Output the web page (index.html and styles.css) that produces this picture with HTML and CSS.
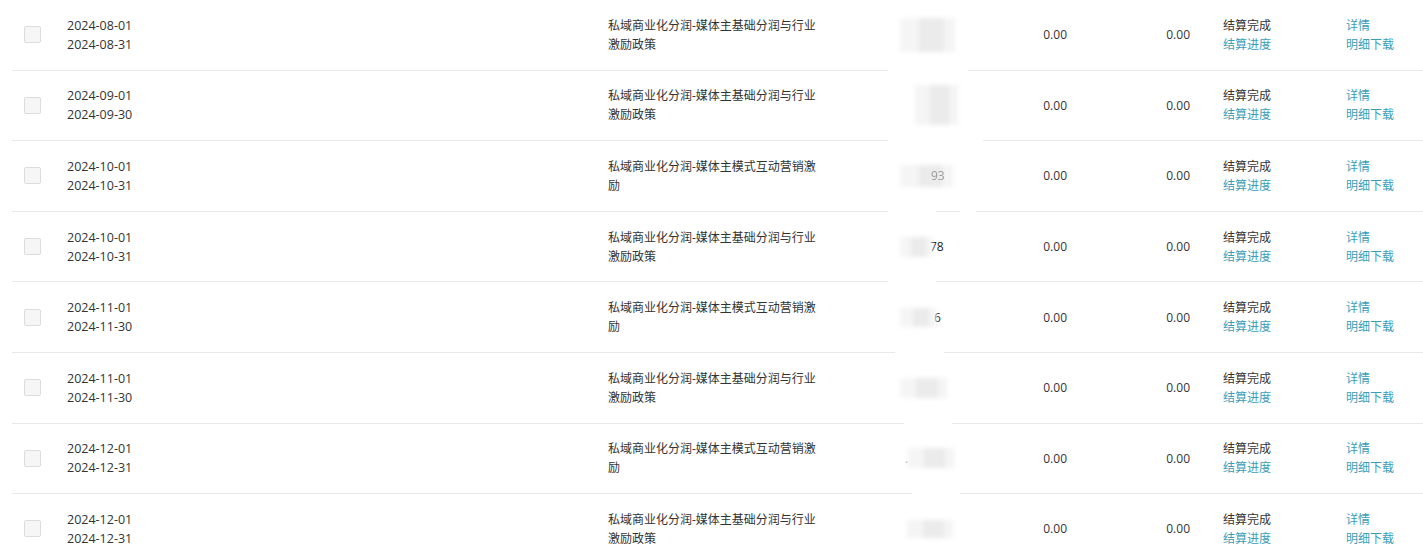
FILE: index.html
```html
<!DOCTYPE html>
<html lang="zh-CN">
<head>
    <meta charset="UTF-8">
    <title>结算记录</title>
    <link rel="stylesheet" href="styles.css">
</head>
<body>

    <div class="list">
        <!-- 2024-08 -->
        <div class="row">
            <div class="c-check"><span class="checkbox"></span></div>
            <div class="c-date"><div>2024-08-01</div><div>2024-08-31</div></div>
            <div class="c-desc">私域商业化分润-媒体主基础分润与行业激励政策</div>
            <div class="c-amount g1"><span class="smear s1"></span></div>
            <div class="c-num">0.00</div>
            <div class="c-num">0.00</div>
            <div class="c-status"><div>结算完成</div><a href="#">结算进度</a></div>
            <div class="c-ops"><a href="#">详情</a><a href="#">明细下载</a></div>
        </div>
        <div class="row">
            <div class="c-check"><span class="checkbox"></span></div>
            <div class="c-date"><div>2024-09-01</div><div>2024-09-30</div></div>
            <div class="c-desc">私域商业化分润-媒体主基础分润与行业激励政策</div>
            <div class="c-amount g2"><span class="smear s2"></span></div>
            <div class="c-num">0.00</div>
            <div class="c-num">0.00</div>
            <div class="c-status"><div>结算完成</div><a href="#">结算进度</a></div>
            <div class="c-ops"><a href="#">详情</a><a href="#">明细下载</a></div>
        </div>
        <div class="row">
            <div class="c-check"><span class="checkbox"></span></div>
            <div class="c-date"><div>2024-10-01</div><div>2024-10-31</div></div>
            <div class="c-desc">私域商业化分润-媒体主模式互动营销激励</div>
            <div class="c-amount g3"><span class="smear s3"></span><span class="peek p3">93</span></div>
            <div class="c-num">0.00</div>
            <div class="c-num">0.00</div>
            <div class="c-status"><div>结算完成</div><a href="#">结算进度</a></div>
            <div class="c-ops"><a href="#">详情</a><a href="#">明细下载</a></div>
        </div>
        <div class="row">
            <div class="c-check"><span class="checkbox"></span></div>
            <div class="c-date"><div>2024-10-01</div><div>2024-10-31</div></div>
            <div class="c-desc">私域商业化分润-媒体主基础分润与行业激励政策</div>
            <div class="c-amount g4"><span class="smear s4"></span><span class="peek">78</span></div>
            <div class="c-num">0.00</div>
            <div class="c-num">0.00</div>
            <div class="c-status"><div>结算完成</div><a href="#">结算进度</a></div>
            <div class="c-ops"><a href="#">详情</a><a href="#">明细下载</a></div>
        </div>
        <div class="row">
            <div class="c-check"><span class="checkbox"></span></div>
            <div class="c-date"><div>2024-11-01</div><div>2024-11-30</div></div>
            <div class="c-desc">私域商业化分润-媒体主模式互动营销激励</div>
            <div class="c-amount g5"><span class="smear s5"></span><span class="peek">6</span></div>
            <div class="c-num">0.00</div>
            <div class="c-num">0.00</div>
            <div class="c-status"><div>结算完成</div><a href="#">结算进度</a></div>
            <div class="c-ops"><a href="#">详情</a><a href="#">明细下载</a></div>
        </div>
        <div class="row">
            <div class="c-check"><span class="checkbox"></span></div>
            <div class="c-date"><div>2024-11-01</div><div>2024-11-30</div></div>
            <div class="c-desc">私域商业化分润-媒体主基础分润与行业激励政策</div>
            <div class="c-amount g6"><span class="smear s6"></span></div>
            <div class="c-num">0.00</div>
            <div class="c-num">0.00</div>
            <div class="c-status"><div>结算完成</div><a href="#">结算进度</a></div>
            <div class="c-ops"><a href="#">详情</a><a href="#">明细下载</a></div>
        </div>
        <div class="row">
            <div class="c-check"><span class="checkbox"></span></div>
            <div class="c-date"><div>2024-12-01</div><div>2024-12-31</div></div>
            <div class="c-desc">私域商业化分润-媒体主模式互动营销激励</div>
            <div class="c-amount g7"><span class="dot">.</span><span class="smear s7"></span></div>
            <div class="c-num">0.00</div>
            <div class="c-num">0.00</div>
            <div class="c-status"><div>结算完成</div><a href="#">结算进度</a></div>
            <div class="c-ops"><a href="#">详情</a><a href="#">明细下载</a></div>
        </div>
        <div class="row">
            <div class="c-check"><span class="checkbox"></span></div>
            <div class="c-date"><div>2024-12-01</div><div>2024-12-31</div></div>
            <div class="c-desc">私域商业化分润-媒体主基础分润与行业激励政策</div>
            <div class="c-amount"><span class="smear s8"></span></div>
            <div class="c-num">0.00</div>
            <div class="c-num">0.00</div>
            <div class="c-status"><div>结算完成</div><a href="#">结算进度</a></div>
            <div class="c-ops"><a href="#">详情</a><a href="#">明细下载</a></div>
        </div>
    </div>

</body>
</html>
```

FILE: styles.css
```css
/* Base */
body {
    margin: 0;
    background-color: #fff;
    color: #333;
    font-family: "Open Sans", "Noto Sans CJK SC", sans-serif;
    font-size: 12px;
    line-height: 19px;
    overflow: hidden;
}

a {
    color: #3b9db8;
    text-decoration: none;
    display: block;
}

/* List rows */
.list {
    margin-left: 12px;
}

.row {
    display: grid;
    grid-template-columns: 43px 541px 292px 102px 89px 123px 132px 1fr;
    align-items: center;
    height: 70.6px;
    box-sizing: border-box;
    border-bottom: 1px solid #e9e9e9;
}

.c-check {
    padding-left: 12px;
}

.checkbox {
    display: block;
    width: 15px;
    height: 15px;
    border: 1px solid #dcdcdc;
    border-radius: 2px;
    background-color: #f6f6f6;
}

.c-date {
    padding-left: 12px;
    font-size: 12.5px;
}

.c-desc {
    padding-left: 12px;
    width: 214px;
}

.c-num {
    text-align: right;
    padding-right: 12px;
}

.c-status {
    padding-left: 21px;
}

.c-ops {
    padding-left: 12px;
}

/* Blurred amount column */
.c-amount {
    position: relative;
    height: 100%;
    display: flex;
    align-items: center;
    padding-left: 12px;
}

.c-amount::after {
    content: "";
    position: absolute;
    left: 0;
    right: 0;
    bottom: -1px;
    height: 1px;
}

.g1::after { background: linear-gradient(90deg, #fff 80px, transparent 80px); }
.g2::after { background: linear-gradient(90deg, #fff 95px, transparent 95px); }
.g3::after { background: linear-gradient(90deg, #fff 48px, transparent 48px, transparent 72px, #fff 72px, #fff 88px, transparent 88px); }
.g4::after { background: linear-gradient(90deg, #fff 48px, transparent 48px); }
.g5::after { background: linear-gradient(90deg, transparent 7px, #fff 7px, #fff 56px, transparent 56px); }
.g6::after { background: linear-gradient(90deg, transparent 16px, #fff 16px, #fff 64px, transparent 64px); }
.g7::after { background: linear-gradient(90deg, transparent 24px, #fff 24px, #fff 72px, transparent 72px); }

.smear {
    display: block;
    height: 20px;
    background: linear-gradient(90deg, #f5f5f5 0, #f5f5f5 35%, #ebebeb 35%, #ebebeb 80%, #f4f4f4 80%);
    filter: blur(2px);
}

.s1 { width: 55px; height: 34px; }
.s2 { width: 43px; height: 40px; margin-left: 15px; }
.s3 { width: 53px; height: 22px; }
.s4 { width: 32px; }
.s5 { width: 36px; height: 19px; }
.s6 { width: 47px; }
.s7 { width: 46px; }
.s8 { width: 46px; height: 18px; margin-left: 7px; }

.peek {
    margin-left: -2px;
    color: #222;
}

.p3 {
    margin-left: -22px;
    color: #999;
    filter: blur(0.7px);
}

.dot {
    margin-left: 5px;
    color: #999;
}
```
